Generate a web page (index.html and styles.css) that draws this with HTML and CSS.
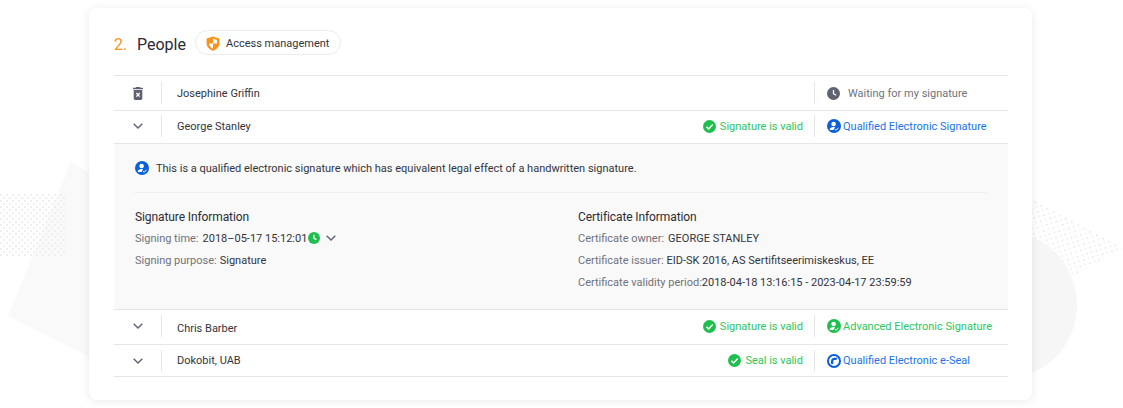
FILE: index.html
```html
<!DOCTYPE html>
<html lang="en">
<head>
<meta charset="utf-8">
<title>People</title>
<link rel="stylesheet" href="styles.css">
</head>
<body>
<svg class="backdrop" width="1123" height="408" viewBox="0 0 1123 408" aria-hidden="true">
  <defs>
    <pattern id="dots" width="6" height="6" patternUnits="userSpaceOnUse" y="194">
      <rect width="2" height="2" fill="#efefef"/>
      <rect x="3" y="3" width="2" height="2" fill="#efefef"/>
    </pattern>
    <pattern id="dots2" width="7" height="7" patternUnits="userSpaceOnUse" patternTransform="rotate(28)">
      <rect width="1.5" height="1.5" fill="#e2e2e2"/>
      <rect x="3.5" y="3.5" width="1.5" height="1.5" fill="#ebebeb"/>
    </pattern>
  </defs>
  <polygon points="71,162 100,180 100,362 8,316" fill="#f9f9f9"/>
  <rect x="0" y="194" width="65" height="63" fill="url(#dots)"/>
  <polygon points="1032,198 1122,248 1073,277 1032,260" fill="url(#dots2)"/>
  <circle cx="1003" cy="305" r="74" fill="#f6f6f6"/>
</svg>
<main class="card">
  <header class="head">
    <span class="num">2.</span>
    <h2 class="title">People</h2>
    <span class="pill">
      <svg class="ic-shield" width="14" height="15" viewBox="0 0 14 15"><path d="M7 0.5 13.4 2.6V7.2C13.4 10.8 10.8 13.4 7 14.8 3.2 13.4.6 10.8.6 7.2V2.6Z" fill="#f7941d"/><path d="M7 2.6V7.4H3C3.1 9.7 4.8 11.4 7 12.5V7.4H11V3.9Z" fill="#fff"/></svg>
      Access management
    </span>
  </header>

  <section class="list">
    <div class="row r1">
      <div class="lead"><svg width="10" height="13" viewBox="0 0 10 13"><path d="M3.3 0H6.7L7.4.8H10V2.2H0V.8H2.6ZM.7 3H9.3V11.6C9.3 12.4 8.7 13 7.9 13H2.1C1.3 13 .7 12.4 .7 11.6Z" fill="#5f6270"/><path d="M3.4 6 6.6 9.6M6.6 6 3.4 9.6" stroke="#fff" stroke-width="1.3"/></svg></div>
      <div class="name">Josephine Griffin</div>
      <div class="kind grey"><svg class="ic" width="13" height="13" viewBox="0 0 13 13"><circle cx="6.5" cy="6.5" r="6.5" fill="#5f6270"/><path d="M6.5 3V6.7L9.2 8.3" fill="none" stroke="#fff" stroke-width="1.3"/></svg>Waiting for my signature</div>
    </div>
    <div class="row r2">
      <div class="lead"><svg class="chev" width="10" height="6" viewBox="0 0 10 6"><path d="M.7.8 5 5 9.3.8" fill="none" stroke="#5f6270" stroke-width="1.4"/></svg></div>
      <div class="name">George Stanley</div>
      <div class="status"><svg class="ic" width="13" height="13" viewBox="0 0 13 13"><circle cx="6.5" cy="6.5" r="6.5" fill="#1fbf4f"/><path d="M3.4 6.7 5.6 8.9 9.7 4.6" fill="none" stroke="#fff" stroke-width="1.5"/></svg>Signature is valid</div>
      <div class="kind blue"><svg class="ic" width="14" height="14" viewBox="0 0 14 14"><circle cx="7" cy="7" r="7" fill="#0b5fd8"/><circle cx="6.6" cy="5" r="2.3" fill="#fff"/><path d="M2.6 11C2.9 8.8 4.4 8 6.4 8 7 8 7.6 8.1 8 8.3L6.6 11Z" fill="#fff"/><path d="M8 10.2 9.2 11.3 11.4 8.8" fill="none" stroke="#fff" stroke-width="1"/></svg>Qualified Electronic Signature</div>
    </div>
    <div class="detail">
      <p class="note"><svg class="ic" width="14" height="14" viewBox="0 0 14 14"><circle cx="7" cy="7" r="7" fill="#0b5fd8"/><circle cx="6.6" cy="5" r="2.3" fill="#fff"/><path d="M2.6 11C2.9 8.8 4.4 8 6.4 8 7 8 7.6 8.1 8 8.3L6.6 11Z" fill="#fff"/><path d="M8 10.2 9.2 11.3 11.4 8.8" fill="none" stroke="#fff" stroke-width="1"/></svg>This is a qualified electronic signature which has equivalent legal effect of a handwritten signature.</p>
      <div class="info">
        <div class="col">
          <h3 class="col-title">Signature Information</h3>
          <div class="line"><span class="lbl">Signing time:</span><span class="val">2018&#8211;05-17 15:12:01</span><svg class="clock" width="12" height="12" viewBox="0 0 12 12"><circle cx="6" cy="6" r="6" fill="#1fbf4f"/><path d="M6 2.8V6.3L8.4 7.6" fill="none" stroke="#fff" stroke-width="1.2"/></svg><svg class="chev-in" width="10" height="6" viewBox="0 0 10 6"><path d="M.7.8 5 5 9.3.8" fill="none" stroke="#5f6270" stroke-width="1.4"/></svg></div>
          <div class="line"><span class="lbl">Signing purpose:</span><span class="val">Signature</span></div>
        </div>
        <div class="col">
          <h3 class="col-title">Certificate Information</h3>
          <div class="line"><span class="lbl">Certificate owner:</span><span class="val">GEORGE STANLEY</span></div>
          <div class="line"><span class="lbl">Certificate issuer:</span><span class="val">EID-SK 2016, AS Sertifitseerimiskeskus, EE</span></div>
          <div class="line"><span class="lbl tight">Certificate validity period:</span><span class="val">2018-04-18 13:16:15 - 2023-04-17 23:59:59</span></div>
        </div>
      </div>
    </div>
    <div class="row r3">
      <div class="lead"><svg class="chev" width="10" height="6" viewBox="0 0 10 6"><path d="M.7.8 5 5 9.3.8" fill="none" stroke="#5f6270" stroke-width="1.4"/></svg></div>
      <div class="name">Chris Barber</div>
      <div class="status"><svg class="ic" width="13" height="13" viewBox="0 0 13 13"><circle cx="6.5" cy="6.5" r="6.5" fill="#1fbf4f"/><path d="M3.4 6.7 5.6 8.9 9.7 4.6" fill="none" stroke="#fff" stroke-width="1.5"/></svg>Signature is valid</div>
      <div class="kind green"><svg class="ic" width="14" height="14" viewBox="0 0 14 14"><circle cx="7" cy="7" r="7" fill="#1fbf4f"/><circle cx="6.6" cy="5" r="2.3" fill="#fff"/><path d="M2.6 11C2.9 8.8 4.4 8 6.4 8 7 8 7.6 8.1 8 8.3L6.6 11Z" fill="#fff"/><path d="M8 10.2 9.2 11.3 11.4 8.8" fill="none" stroke="#fff" stroke-width="1"/></svg>Advanced Electronic Signature</div>
    </div>
    <div class="row r4">
      <div class="lead"><svg class="chev" width="10" height="6" viewBox="0 0 10 6"><path d="M.7.8 5 5 9.3.8" fill="none" stroke="#5f6270" stroke-width="1.4"/></svg></div>
      <div class="name">Dokobit, UAB</div>
      <div class="status"><svg class="ic" width="13" height="13" viewBox="0 0 13 13"><circle cx="6.5" cy="6.5" r="6.5" fill="#1fbf4f"/><path d="M3.4 6.7 5.6 8.9 9.7 4.6" fill="none" stroke="#fff" stroke-width="1.5"/></svg>Seal is valid</div>
      <div class="kind blue"><svg class="ic" width="14" height="14" viewBox="0 0 14 14"><circle cx="7" cy="7" r="6" fill="#fff" stroke="#0b5fd8" stroke-width="2"/><path d="M4 7.2C4 5 5.600 3.800 7.500 3.800H10.500L9.300 6H7.500C6.800 6 6.300 6.500 6.300 7.200V10H4Z" fill="#0b5fd8"/></svg>Qualified Electronic e-Seal</div>
    </div>
  </section>
</main>
</body>
</html>
```
FILE: styles.css
```css
* { box-sizing: border-box; }
html, body { margin: 0; height: 408px; overflow: hidden; background: #fff; }
body {
  font-family: Roboto, "Liberation Sans", sans-serif;
  font-size: 11px;
  color: #33343c;
  padding: 8px 91px 0 89px;
  position: relative;
}
.backdrop { position: absolute; left: 0; top: 0; }
.card {
  position: relative;
  height: 392px;
  background: #fff;
  border-radius: 8px;
  box-shadow: 0 1px 10px rgba(0, 0, 0, .09);
  padding: 0 24px 0 25px;
}
.head { display: flex; align-items: center; height: 67px; padding-top: 5px; }
.num { font-size: 16px; color: #f7941d; width: 23px; }
.title { margin: 0; font-size: 16px; font-weight: 400; color: #2b2c33; }
.pill {
  display: flex; align-items: center; gap: 6px;
  margin-left: 9px; margin-bottom: 3px;
  height: 25px; padding: 1px 11px 0 10px;
  border: 1px solid #ececee; border-radius: 13px;
}
.list { border-top: 1px solid #e4e4e6; }
.row { display: flex; align-items: center; border-bottom: 1px solid #e6e6e8; }
.r1 { height: 35px; }
.r2 { height: 33px; padding-bottom: 2px; }
.r3 { height: 35px; padding-bottom: 2px; }
.r3 .name { padding-top: 4px; }
.r4 { height: 32px; }
.lead {
  width: 48px; height: 22px; flex: none;
  display: flex; align-items: center; justify-content: center;
  border-right: 1px solid #e6e6e8;
}
.name { flex: 1; padding-left: 15px; }
.status { display: flex; align-items: center; gap: 4px; color: #2cc65c; padding-right: 11px; height: 22px; }
.kind {
  width: 194px; height: 22px; flex: none;
  display: flex; align-items: center;
  padding-left: 12px;
  border-left: 1px solid #e6e6e8;
}
.kind .ic { margin-right: 2px; }
.grey { color: #70727c; }
.kind.grey .ic { margin-right: 8px; }
.blue { color: #1a73e8; }
.green { color: #2cc65c; }
.detail { background: #f9f9f9; height: 166px; padding: 0 21px; border-bottom: 1px solid #e6e6e8; }
.note {
  margin: 0; height: 49px;
  display: flex; align-items: center; gap: 7px;
  border-bottom: 1px solid #efefef;
}
.info { display: flex; padding-top: 17px; }
.col { width: 443px; flex: none; }
.col-title { margin: 0 0 3px; font-size: 12px; font-weight: 400; line-height: 14px; color: #2b2c33; letter-spacing: -.1px; }
.line { display: flex; align-items: center; height: 22px; }
.lbl { color: #70727c; margin-right: 3px; }
.line:first-of-type .lbl { margin-right: 4px; }
.lbl.tight { margin-right: 0; }
.clock { margin-left: 1px; }
.chev-in { margin-left: 6px; }
```
